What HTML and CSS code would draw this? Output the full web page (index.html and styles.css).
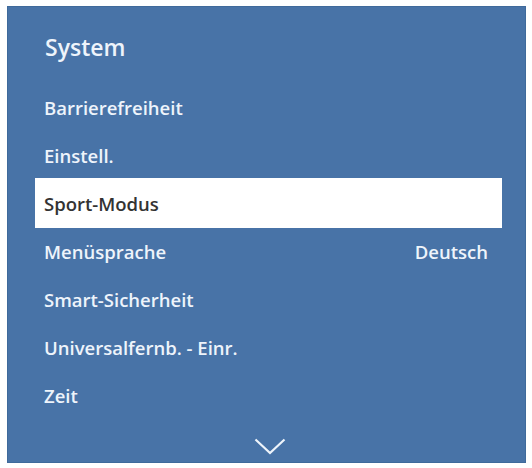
FILE: index.html
```html
<!DOCTYPE html>
<html>
<head>
<meta charset="utf-8">
<link rel="stylesheet" href="styles.css">
</head>
<body>
<div class="panel">
  <div class="title">System</div>
  <ul class="menu">
    <li class="row">Barrierefreiheit</li>
    <li class="row">Einstell.</li>
    <li class="row selected">Sport-Modus</li>
    <li class="row"><span>Menüsprache</span><span>Deutsch</span></li>
    <li class="row">Smart-Sicherheit</li>
    <li class="row">Universalfernb. - Einr.</li>
    <li class="row">Zeit</li>
  </ul>
  <div class="more">
    <svg width="32" height="17" viewBox="0 0 32 17"><path d="M1.5 1.5 L16 15 L30.5 1.5" fill="none" stroke="#eef4fb" stroke-width="2.2"/></svg>
  </div>
</div>
</body>
</html>
```
FILE: styles.css
```css
html, body {
  margin: 0;
  padding: 0;
  background: #ffffff;
}
body {
  padding: 6px 6px 5px 7px;
  font-family: "Open Sans", "Noto Sans", sans-serif;
}
.panel {
  width: 517px;
  height: 455px;
  background: #4873a7;
  border: 1px solid #3f6a9b;
  color: #eef4fb;
}
.title {
  padding: 20px 0 0 37px;
  line-height: 40px;
  height: 40px;
  font-size: 23px;
  font-weight: 600;
  margin-bottom: 16px;
}
.menu {
  list-style: none;
  margin: 0;
  padding: 0;
}
.row {
  margin: 0 23px 0 27px;
  padding: 0 14px 0 9px;
  height: 48px;
  display: flex;
  align-items: center;
  justify-content: space-between;
  font-size: 18.5px;
  font-weight: 600;
}
.row.selected {
  background: #ffffff;
  color: #333333;
  height: 50px;
  margin-top: -1px;
  margin-bottom: -1px;
}
.more {
  display: flex;
  justify-content: center;
  padding-top: 19px;
}
.more svg {
  display: block;
  margin-left: 6px;
}
```
